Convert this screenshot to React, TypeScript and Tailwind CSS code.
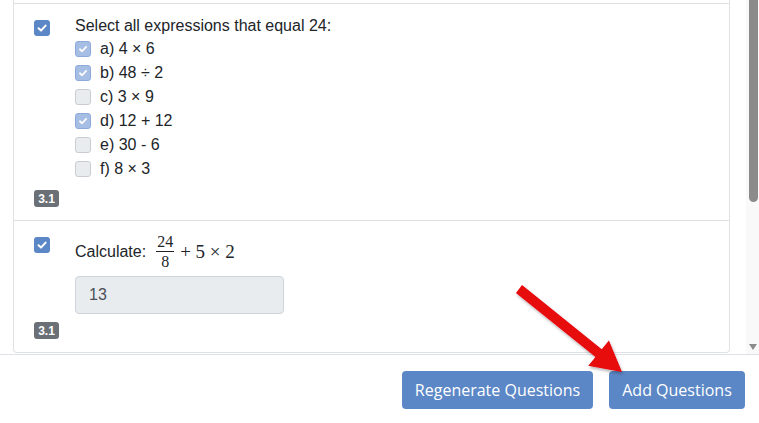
import type { ReactNode } from "react"

const options = [
  { label: "a) 4 × 6", checked: true },
  { label: "b) 48 ÷ 2", checked: true },
  { label: "c) 3 × 9", checked: false },
  { label: "d) 12 + 12", checked: true },
  { label: "e) 30 - 6", checked: false },
  { label: "f) 8 × 3", checked: false },
]

function Check({ className }: { className?: string }) {
  return (
    <svg viewBox="0 0 16 16" className={className} fill="none">
      <path
        d="M4.5 8.3 L7 10.6 L11.6 5.6"
        stroke="white"
        strokeWidth="2"
        strokeLinecap="round"
        strokeLinejoin="round"
      />
    </svg>
  )
}

function SelectBox() {
  return (
    <div className="mt-[5px] flex h-4 w-4 shrink-0 items-center justify-center rounded-[3px] bg-[#5b87c6]">
      <Check className="h-4 w-4" />
    </div>
  )
}

function OptionBox({ checked }: { checked: boolean }) {
  if (checked) {
    return (
      <div className="flex h-4 w-4 shrink-0 items-center justify-center rounded-[3px] border border-[#8eaadb] bg-[#a7bee4]">
        <Check className="h-[14px] w-[14px]" />
      </div>
    )
  }
  return (
    <div className="h-4 w-4 shrink-0 rounded-[3px] border border-[#c9cdd1] bg-[#e9ecef]" />
  )
}

function Badge() {
  return (
    <div className="flex h-[17px] w-[25px] items-center justify-center rounded-[3px] bg-[#6b7077] text-[12px] font-bold leading-none text-white">
      3.1
    </div>
  )
}

function QuestionCard({ children }: { children: ReactNode }) {
  return (
    <div className="border-t border-[#dfe2e5] pb-[13px] pl-[20px] pt-[11px]">
      {children}
    </div>
  )
}

function Scrollbar() {
  return (
    <div className="flex w-[13px] shrink-0 flex-col justify-between bg-[#f9f9f9] pb-[4px]">
      <div className="ml-[3px] h-[202px] w-[9px] rounded-b-full bg-[#8b8b8b]" />
      <div className="ml-[3px] h-0 w-0 border-x-[4.5px] border-t-[6px] border-x-transparent border-t-[#8b8b8b]" />
    </div>
  )
}

export default function App() {
  return (
    <div className="relative h-[423px] w-[759px] overflow-hidden bg-white font-['Liberation_Sans',Arial,sans-serif] text-[16px] text-[#212529]">
      <div className="flex h-[355px] border-b border-[#dee2e6]">
        <div className="min-w-0 flex-1 overflow-hidden pl-[13px] pr-[16px]">
          <div className="rounded-b-[4px] border-x border-b border-[#dfe2e5] pt-[3px]">
            <QuestionCard>
              <div className="flex items-start">
                <SelectBox />
                <div className="ml-[25px]">
                  <p className="h-[22px] leading-[22px]">Select all expressions that equal 24:</p>
                  {options.map((o) => (
                    <div key={o.label} className="flex h-6 items-center gap-[9px] leading-6">
                      <OptionBox checked={o.checked} />
                      <span>{o.label}</span>
                    </div>
                  ))}
                </div>
              </div>
              <div className="mt-[9px]">
                <Badge />
              </div>
            </QuestionCard>

            <QuestionCard>
              <div className="flex items-start">
                <SelectBox />
                <div className="ml-[25px]">
                  <div className="flex h-[40px] items-center">
                    <span className="leading-6">Calculate:</span>
                    <span className="ml-[9px] flex items-center font-['Liberation_Serif','Times_New_Roman',serif]">
                      <span className="-mt-[2px] flex flex-col items-center px-[1px]">
                        <span className="text-[16px] leading-[15px]">24</span>
                        <span className="my-[2px] h-px w-[18px] bg-[#222]" />
                        <span className="text-[16px] leading-[15px]">8</span>
                      </span>
                      <span className="ml-[5px] whitespace-pre text-[19px] leading-6">+ 5 × 2</span>
                    </span>
                  </div>
                  <div className="mt-[4px] flex h-[38px] w-[209px] items-center rounded-[4px] border border-[#ced4da] bg-[#e9ecef] pl-[13px] text-[#495057]">
                    13
                  </div>
                </div>
              </div>
              <div className="mt-[8px]">
                <Badge />
              </div>
            </QuestionCard>
          </div>
        </div>
        <Scrollbar />
      </div>

      <div className="flex justify-end gap-4 pr-[14px] pt-4 font-['Open_Sans',sans-serif]">
        <button className="flex h-[38px] w-[191px] items-center justify-center rounded-[4px] bg-[#5b87c6] text-[16px] text-white">
          Regenerate Questions
        </button>
        <button className="flex h-[38px] w-[136px] items-center justify-center rounded-[4px] bg-[#5b87c6] text-[16px] text-white">
          Add Questions
        </button>
      </div>

      <svg
        className="pointer-events-none absolute left-0 top-0 h-[423px] w-[759px]"
        viewBox="0 0 759 423"
      >
        <defs>
          <filter id="shadow" x="-20%" y="-20%" width="140%" height="140%">
            <feDropShadow dx="1" dy="2" stdDeviation="1.5" floodColor="#000" floodOpacity="0.3" />
          </filter>
        </defs>
        <polygon
          points="522,285 601.7,349.2 608.9,340.4 622,372 588.3,365.8 595.5,357 516,293"
          fill="#e8070d"
          filter="url(#shadow)"
        />
      </svg>
    </div>
  )
}
